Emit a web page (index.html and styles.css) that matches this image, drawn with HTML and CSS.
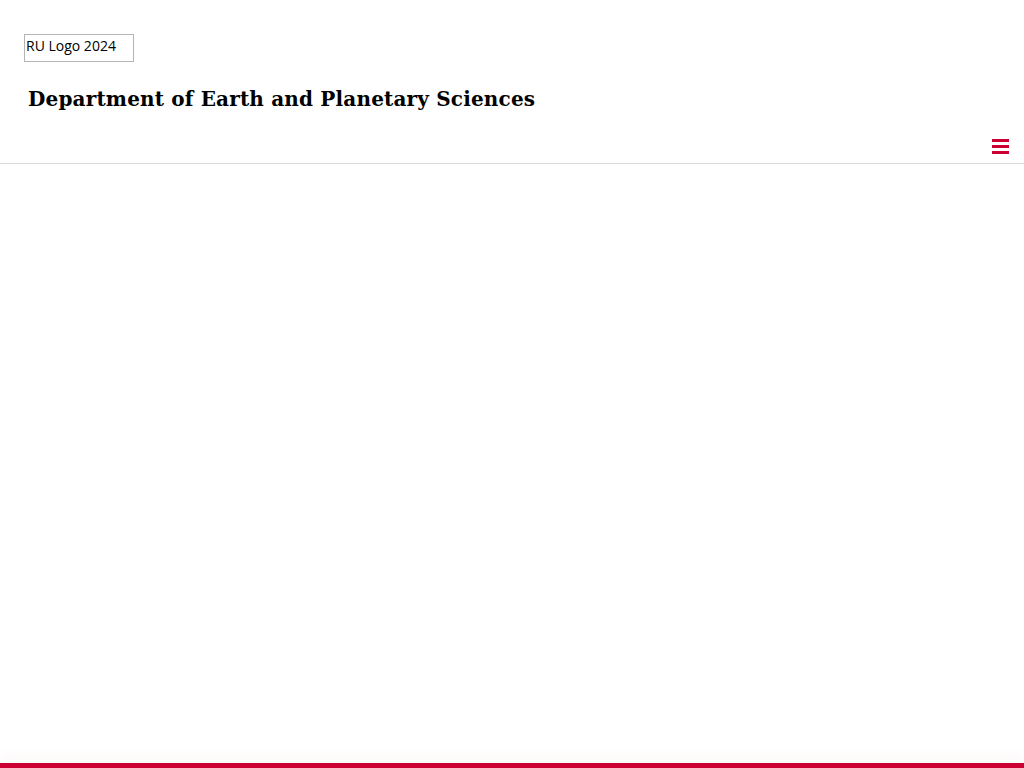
FILE: index.html
```html
<!DOCTYPE html>
<html lang="en">
<head>
<meta charset="utf-8">
<title>Department of Earth and Planetary Sciences</title>
<link rel="stylesheet" href="styles.css">
</head>
<body>
<header class="site-header">
  <div class="brand">
    <a class="logo" href="#">RU Logo 2024</a>
    <h1 class="site-title">Department of Earth and Planetary Sciences</h1>
  </div>
  <div class="nav-row">
    <button class="menu-toggle" aria-label="Menu">
      <svg width="17" height="15" viewBox="0 0 17 15"><rect x="0" y="0" width="17" height="3" fill="#cc0033"/><rect x="0" y="6" width="17" height="3" fill="#cc0033"/><rect x="0" y="12" width="17" height="3" fill="#cc0033"/></svg>
    </button>
  </div>
</header>
<main class="content"></main>
<footer class="bottom-bar"></footer>
</body>
</html>
```
FILE: styles.css
```css
html, body {
  margin: 0;
  padding: 0;
  height: 100%;
  background: #fff;
}
body {
  display: flex;
  flex-direction: column;
  font-family: "Lato", "Liberation Sans", sans-serif;
  color: #000;
}
.site-header {
  border-bottom: 1px solid #dcdcdc;
}
.brand {
  padding: 34px 24px 0 24px;
}
.logo {
  display: block;
  width: 107px;
  height: 26px;
  border: 1px solid #b4b4b4;
  font-family: "Open Sans", "Liberation Sans", sans-serif;
  font-size: 14px;
  line-height: 22px;
  padding-left: 1px;
  color: #000;
  text-decoration: none;
  letter-spacing: 0;
}
.site-title {
  margin: 21px 0 0 4px;
  font-family: "DejaVu Serif", "Liberation Serif", serif;
  font-weight: bold;
  font-size: 20px;
  line-height: 32px;
  letter-spacing: 0.17px;
}
.nav-row {
  display: flex;
  justify-content: flex-end;
  padding: 0 15px 9px 0;
  margin-top: 24px;
}
.menu-toggle {
  border: 0;
  background: none;
  padding: 0;
  display: block;
  line-height: 0;
}
.content {
  flex: 1;
}
.bottom-bar {
  height: 5px;
  background: #cc0033;
  box-shadow: 0 -6px 12px rgba(204, 0, 51, 0.06);
}
```
